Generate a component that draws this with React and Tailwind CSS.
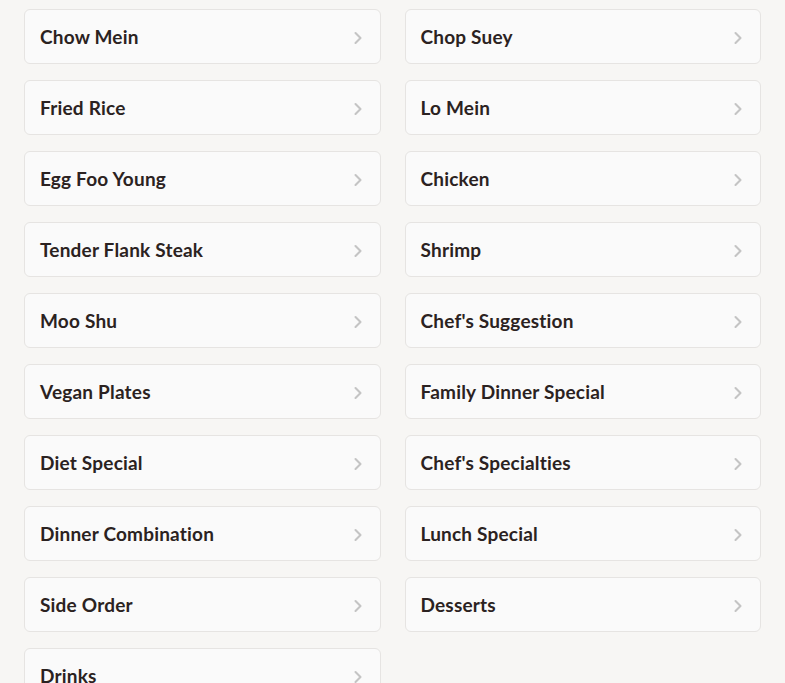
import React from 'react';
import { ChevronRight } from 'lucide-react';

const categories = [
  'Chow Mein',
  'Chop Suey',
  'Fried Rice',
  'Lo Mein',
  'Egg Foo Young',
  'Chicken',
  'Tender Flank Steak',
  'Shrimp',
  'Moo Shu',
  "Chef's Suggestion",
  'Vegan Plates',
  'Family Dinner Special',
  'Diet Special',
  "Chef's Specialties",
  'Dinner Combination',
  'Lunch Special',
  'Side Order',
  'Desserts',
  'Drinks',
];

export default function App() {
  return (
    <div className="min-h-screen bg-[#f7f6f4] px-6 pt-[9px] pb-6 font-['Lato','Noto_Sans',sans-serif]">
      <div className="grid grid-cols-2 gap-x-6 gap-y-4">
        {categories.map((c) => (
          <button
            key={c}
            className="flex h-[55px] items-center justify-between rounded-md border border-[#e6e4e2] bg-[#fafafa] pl-[15px] pr-[12px] pt-[2px] text-left"
          >
            <span className="text-[19px] font-bold tracking-[0.2px] text-[#2b2221]">{c}</span>
            <ChevronRight className="h-5 w-5 text-[#c4c4c4]" strokeWidth={2.5} />
          </button>
        ))}
      </div>
    </div>
  );
}
